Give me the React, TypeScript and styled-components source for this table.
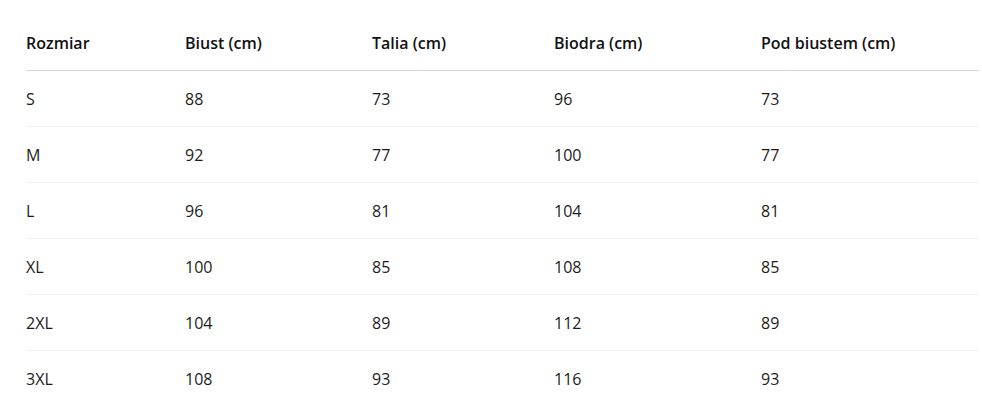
import React from "react";
import styled, { createGlobalStyle } from "styled-components";

const Global = createGlobalStyle`
  html, body { margin: 0; padding: 0; background: #ffffff; }
  body { font-family: "Open Sans", "Noto Sans", sans-serif; color: #1a1a1a; }
`;

const Page = styled.div`
  padding: 15px 3px 0 26px;
`;

const Table = styled.div`
  display: grid;
  grid-template-columns: 159px 187px 182px 207px 218px;
  width: 953px;
`;

const Cell = styled.div<{ $head?: boolean; $last?: boolean }>`
  height: 56px;
  display: flex;
  align-items: center;
  font-size: 16px;
  font-weight: ${(p) => (p.$head ? 600 : 400)};
  color: ${(p) => (p.$head ? "#111" : "#1c1c1c")};
  border-bottom: ${(p) =>
    p.$last ? "none" : p.$head ? "1px solid #d8d8d8" : "1px solid #f0f0f0"};
  box-sizing: border-box;
  padding-top: 0;
`;

const headers = ["Rozmiar", "Biust (cm)", "Talia (cm)", "Biodra (cm)", "Pod biustem (cm)"];
const rows = [
  ["S", "88", "73", "96", "73"],
  ["M", "92", "77", "100", "77"],
  ["L", "96", "81", "104", "81"],
  ["XL", "100", "85", "108", "85"],
  ["2XL", "104", "89", "112", "89"],
  ["3XL", "108", "93", "116", "93"],
];

export default function App() {
  return (
    <>
      <Global />
      <Page>
        <Table>
          {headers.map((h) => (
            <Cell key={h} $head>
              {h}
            </Cell>
          ))}
          {rows.map((r, i) =>
            r.map((c, j) => (
              <Cell key={`${i}-${j}`} $last={i === rows.length - 1}>
                {c}
              </Cell>
            ))
          )}
        </Table>
      </Page>
    </>
  );
}
